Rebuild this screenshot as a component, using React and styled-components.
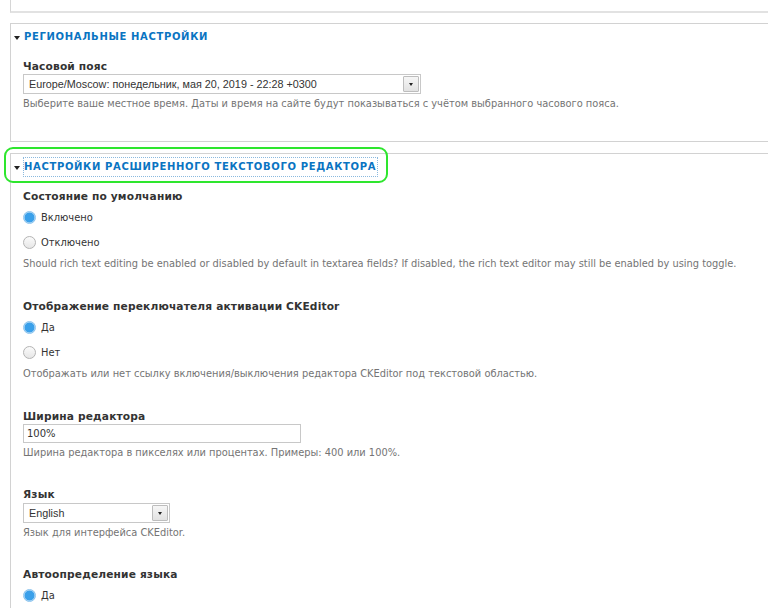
import React from "react";
import styled, { createGlobalStyle } from "styled-components";

const Global = createGlobalStyle`
  html, body { margin: 0; padding: 0; background: #fff; }
  body { font-family: "DejaVu Sans", "Noto Sans", sans-serif; color: #333; overflow: hidden; }
`;

const Page = styled.div`
  width: 768px;
  height: 608px;
  overflow: hidden;
  padding-left: 10px;
  box-sizing: border-box;
  display: flex;
  flex-direction: column;
`;

const TopStub = styled.div`
  width: 800px;
  height: 11px;
  border-left: 1px solid #d6d6d6;
  border-bottom: 2px solid #e2e2e2;
  flex-shrink: 0;
`;

const Fieldset = styled.section`
  position: relative;
  width: 800px;
  box-sizing: border-box;
  flex-shrink: 0;
  margin-top: ${(p) => p.$top}px;
  border: 1px solid #d2d2d2;
  border-right: none;
  ${(p) => (p.$open ? "border-bottom: none;" : "")}
  height: ${(p) => (p.$height ? `${p.$height}px` : "auto")};
  padding: ${(p) => p.$pt}px 0 0 12px;
  display: flex;
  flex-direction: column;
`;

const Legend = styled.div`
  display: flex;
  align-items: center;
  gap: 4px;
  margin-left: -9px;
  height: 14px;
`;

const Caret = styled.span`
  width: 0;
  height: 0;
  border-left: 3px solid transparent;
  border-right: 3px solid transparent;
  border-top: 4px solid #222;
  margin-top: 2px;
`;

const LegendLink = styled.span`
  font-weight: bold;
  font-size: 10px;
  letter-spacing: 0.66px;
  text-transform: uppercase;
  color: #0a74c2;
  line-height: 14px;
  padding: 2px 1px 2px 0;
  outline: ${(p) => (p.$focused ? "1px dotted #8ab9de" : "none")};
`;

const Highlight = styled.div`
  position: absolute;
  left: -7px;
  top: -7px;
  width: 384px;
  height: 36px;
  box-sizing: border-box;
  border: 2px solid #2ee62e;
  border-radius: 9px;
  pointer-events: none;
`;

const Item = styled.div`
  display: flex;
  flex-direction: column;
  margin-top: ${(p) => p.$gap}px;
`;

const Label = styled.div`
  font-weight: bold;
  font-size: 10.65px;
  line-height: 14px;
  color: #333;
  letter-spacing: 0.15px;
`;

const Description = styled.div`
  font-size: 9.85px;
  line-height: 14px;
  color: #747474;
  margin-top: ${(p) => p.$mt ?? 2}px;
  white-space: nowrap;
`;

const SelectBox = styled.div`
  width: ${(p) => p.$w}px;
  height: 20px;
  box-sizing: border-box;
  margin-top: ${(p) => p.$mt ?? 0}px;
  border: 1px solid #c8c8c8;
  background: #fff;
  display: flex;
  align-items: stretch;
`;

const SelectText = styled.span`
  flex: 1;
  font-family: "Liberation Sans", Arial, sans-serif;
  font-size: 10.8px;
  color: #333;
  padding-left: 5px;
  display: flex;
  align-items: center;
`;

const SelectButton = styled.span`
  width: 14px;
  margin: 1px;
  background: linear-gradient(#f6f6f6, #e2e2e2);
  border: 1px solid #bdbdbd;
  border-radius: 1px;
  display: flex;
  align-items: center;
  justify-content: center;
  &::after {
    content: "";
    border-left: 2.5px solid transparent;
    border-right: 2.5px solid transparent;
    border-top: 3px solid #222;
  }
`;

const TextInput = styled.div`
  width: 278px;
  height: 19px;
  box-sizing: border-box;
  border: 1px solid #c8c8c8;
  font-size: 10px;
  color: #333;
  padding-left: 3px;
  display: flex;
  align-items: center;
`;

const RadioGroup = styled.div`
  display: flex;
  flex-direction: column;
  padding-top: 1px;
`;

const RadioRow = styled.div`
  height: 25px;
  display: flex;
  align-items: center;
  gap: 5px;
  font-size: 9.9px;
  color: #333;
`;

const RadioDot = styled.span`
  width: 13px;
  height: 13px;
  box-sizing: border-box;
  border-radius: 50%;
  flex-shrink: 0;
  ${(p) =>
    p.$checked
      ? `background: radial-gradient(circle, #3aa0ea 0 4.6px, #a9d4f4 5.2px);
         border: 1px solid #8cc4ee;`
      : `background: linear-gradient(#fbfbfb, #e6e6e6);
         border: 1px solid #b4b4b4;`}
`;

const Radio = ({ checked, children }) => (
  <RadioRow>
    <RadioDot $checked={checked} />
    {children}
  </RadioRow>
);

export default function App() {
  return (
    <>
      <Global />
      <Page>
        <TopStub />
        <Fieldset $top={10} $height={119} $pt={6}>
          <Legend>
            <Caret />
            <LegendLink>Региональные настройки</LegendLink>
          </Legend>
          <Item $gap={16}>
            <Label>Часовой пояс</Label>
            <SelectBox $w={398}>
              <SelectText>Europe/Moscow: понедельник, мая 20, 2019 - 22:28 +0300</SelectText>
              <SelectButton />
            </SelectBox>
            <Description $mt={3}>
              Выберите ваше местное время. Даты и время на сайте будут показываться с учётом выбранного часового пояса.
            </Description>
          </Item>
        </Fieldset>
        <Fieldset $top={11} $open $pt={6}>
          <Highlight />
          <Legend>
            <Caret />
            <LegendLink $focused>Настройки расширенного текстового редактора</LegendLink>
          </Legend>
          <Item $gap={16}>
            <Label>Состояние по умолчанию</Label>
            <RadioGroup>
              <Radio checked>Включено</Radio>
              <Radio>Отключено</Radio>
            </RadioGroup>
            <Description $mt={2}>
              Should rich text editing be enabled or disabled by default in textarea fields? If disabled, the rich text editor may still be enabled by using toggle.
            </Description>
          </Item>
          <Item $gap={29}>
            <Label>Отображение переключателя активации CKEditor</Label>
            <RadioGroup>
              <Radio checked>Да</Radio>
              <Radio>Нет</Radio>
            </RadioGroup>
            <Description $mt={2}>
              Отображать или нет ссылку включения/выключения редактора CKEditor под текстовой областью.
            </Description>
          </Item>
          <Item $gap={29}>
            <Label>Ширина редактора</Label>
            <TextInput>100%</TextInput>
            <Description $mt={3}>
              Ширина редактора в пикселях или процентах. Примеры: 400 или 100%.
            </Description>
          </Item>
          <Item $gap={28}>
            <Label>Язык</Label>
            <SelectBox $w={147} $mt={1}>
              <SelectText>English</SelectText>
              <SelectButton />
            </SelectBox>
            <Description $mt={3}>Язык для интерфейса CKEditor.</Description>
          </Item>
          <Item $gap={28}>
            <Label>Автоопределение языка</Label>
            <RadioGroup>
              <Radio checked>Да</Radio>
            </RadioGroup>
          </Item>
        </Fieldset>
      </Page>
    </>
  );
}
